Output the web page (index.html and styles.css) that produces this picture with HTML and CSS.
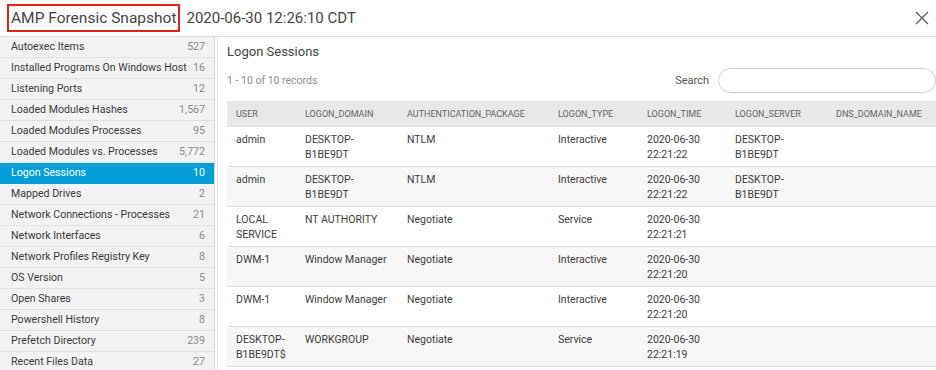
FILE: index.html
```html
<!DOCTYPE html>
<html>

<head>
  <title>AMP Forensic Snapshot</title>
  <link rel="stylesheet" href="styles.css">
</head>

<body>
  <header class="top">
    <h1 class="title">AMP Forensic Snapshot</h1>
    <span class="stamp">2020-06-30 12:26:10 CDT</span>
    <button class="close" aria-label="Close">
      <svg width="14" height="14" viewBox="0 0 14 14">
        <path d="M1 1 L13 13 M13 1 L1 13" stroke="#5a5a5a" stroke-width="1.3" fill="none" />
      </svg>
    </button>
  </header>

  <div class="layout">
    <ul class="side">
      <li><span>Autoexec Items</span><span class="count">527</span></li>
      <li><span>Installed Programs On Windows Host</span><span class="count">16</span></li>
      <li><span>Listening Ports</span><span class="count">12</span></li>
      <li><span>Loaded Modules Hashes</span><span class="count">1,567</span></li>
      <li><span>Loaded Modules Processes</span><span class="count">95</span></li>
      <li><span>Loaded Modules vs. Processes</span><span class="count">5,772</span></li>
      <li class="active"><span>Logon Sessions</span><span class="count">10</span></li>
      <li><span>Mapped Drives</span><span class="count">2</span></li>
      <li><span>Network Connections - Processes</span><span class="count">21</span></li>
      <li><span>Network Interfaces</span><span class="count">6</span></li>
      <li><span>Network Profiles Registry Key</span><span class="count">8</span></li>
      <li><span>OS Version</span><span class="count">5</span></li>
      <li><span>Open Shares</span><span class="count">3</span></li>
      <li><span>Powershell History</span><span class="count">8</span></li>
      <li><span>Prefetch Directory</span><span class="count">239</span></li>
      <li><span>Recent Files Data</span><span class="count">27</span></li>
    </ul>

    <section class="main">
      <h2 class="section-title">Logon Sessions</h2>
      <div class="toolbar">
        <span class="records">1 - 10 of 10 records</span>
        <label class="search">Search <input type="text" autocomplete="off"></label>
      </div>

      <table class="grid">
        <colgroup>
          <col style="width:69px">
          <col style="width:102px">
          <col style="width:151px">
          <col style="width:89px">
          <col style="width:88px">
          <col style="width:101px">
          <col style="width:130px">
        </colgroup>
        <thead>
          <tr>
            <th>USER</th>
            <th>LOGON_DOMAIN</th>
            <th>AUTHENTICATION_PACKAGE</th>
            <th>LOGON_TYPE</th>
            <th>LOGON_TIME</th>
            <th>LOGON_SERVER</th>
            <th>DNS_DOMAIN_NAME</th>
          </tr>
        </thead>
        <tbody>
          <tr>
            <td>admin</td>
            <td>DESKTOP-<br>B1BE9DT</td>
            <td>NTLM</td>
            <td>Interactive</td>
            <td>2020-06-30<br>22:21:22</td>
            <td>DESKTOP-<br>B1BE9DT</td>
            <td></td>
          </tr>
          <tr>
            <td>admin</td>
            <td>DESKTOP-<br>B1BE9DT</td>
            <td>NTLM</td>
            <td>Interactive</td>
            <td>2020-06-30<br>22:21:22</td>
            <td>DESKTOP-<br>B1BE9DT</td>
            <td></td>
          </tr>
          <tr>
            <td>LOCAL<br>SERVICE</td>
            <td>NT AUTHORITY</td>
            <td>Negotiate</td>
            <td>Service</td>
            <td>2020-06-30<br>22:21:21</td>
            <td></td>
            <td></td>
          </tr>
          <tr>
            <td>DWM-1</td>
            <td>Window Manager</td>
            <td>Negotiate</td>
            <td>Interactive</td>
            <td>2020-06-30<br>22:21:20</td>
            <td></td>
            <td></td>
          </tr>
          <tr>
            <td>DWM-1</td>
            <td>Window Manager</td>
            <td>Negotiate</td>
            <td>Interactive</td>
            <td>2020-06-30<br>22:21:20</td>
            <td></td>
            <td></td>
          </tr>
          <tr>
            <td>DESKTOP-<br>B1BE9DT$</td>
            <td>WORKGROUP</td>
            <td>Negotiate</td>
            <td>Service</td>
            <td>2020-06-30<br>22:21:19</td>
            <td></td>
            <td></td>
          </tr>
        </tbody>
      </table>
    </section>
  </div>
</body>

</html>
```

FILE: styles.css
```css
body {
  margin: 0;
  height: 370px;
  overflow: hidden;
  background: #fff;
  color: #3a3a3a;
  font-family: Roboto, "Liberation Sans", Arial, sans-serif;
}

.top {
  display: flex;
  align-items: center;
  height: 36px;
  padding: 0 7px;
  border-bottom: 1px solid #dcdcdc;
}

.title {
  margin: 0;
  padding: 2px 2px 2px 2px;
  border: 2px solid #e2231a;
  font-size: 15.5px;
  font-weight: 400;
  line-height: 20px;
  color: #444;
}

.stamp {
  margin-left: 6px;
  font-size: 15px;
  color: #444;
}

.close {
  margin-left: auto;
  padding: 0;
  border: none;
  background: none;
  display: flex;
}

.layout {
  display: flex;
  height: 333px;
}

.side {
  list-style: none;
  margin: 0;
  padding: 0;
  width: 214px;
  flex-shrink: 0;
  background: #f2f2f2;
  border-right: 1px solid #d4d4d4;
}

.side>li {
  display: flex;
  justify-content: space-between;
  gap: 6px;
  height: 20px;
  line-height: 20px;
  padding: 0 9px 0 11px;
  border-bottom: 1px solid #e0e0e0;
  font-size: 10.6px;
  color: #3a3a3a;
  white-space: nowrap;
}

.side .count {
  color: #8a8a8a;
}

.side>li.active {
  background: #049fd9;
  color: #fff;
  border-bottom-color: #049fd9;
}

.side>li.active .count {
  color: #fff;
}

.main {
  flex-grow: 1;
  min-width: 0;
  margin-left: 2px;
  padding-left: 9px;
  border-left: 1px solid #e2e2e2;
  overflow: hidden;
}

.section-title {
  margin: 7px 0 0;
  font-size: 13px;
  font-weight: 400;
  line-height: 16px;
  color: #444;
}

.toolbar {
  display: flex;
  align-items: center;
  justify-content: space-between;
  margin-top: 8px;
  height: 25px;
}

.records {
  font-size: 10.5px;
  color: #8c8c8c;
}

.search {
  display: flex;
  align-items: center;
  gap: 9px;
  font-size: 11px;
  color: #555;
}

.search input {
  width: 196px;
  height: 23px;
  border: 1px solid #cfcfcf;
  border-radius: 13px;
  padding: 0 10px;
  box-sizing: content-box;
  outline: none;
}

.grid {
  margin-top: 8px;
  border-collapse: collapse;
  table-layout: fixed;
  width: 730px;
  font-size: 10.5px;
}

.grid th {
  height: 25px;
  padding: 0 9px;
  background: #e8e8e8;
  color: #666;
  font-size: 9px;
  font-weight: 400;
  text-align: left;
  border-bottom: 1px solid #dcdcdc;
  white-space: nowrap;
}

.grid td {
  height: 30px;
  padding: 5px 9px 4px;
  line-height: 15px;
  vertical-align: top;
  color: #3c3c3c;
  border-bottom: 1px solid #dedede;
  white-space: nowrap;
}

.grid tbody tr:nth-child(even) {
  background: #f7f7f7;
}
```
